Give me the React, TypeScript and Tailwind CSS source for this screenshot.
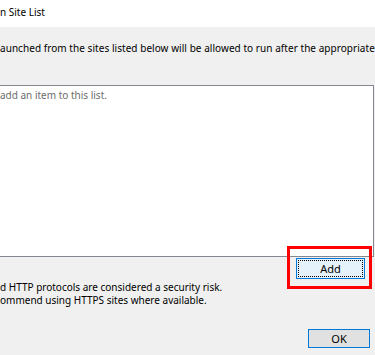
export default function App() {
  const font = { fontFamily: '"Noto Sans", "Open Sans", sans-serif' };
  return (
    <div className="w-[375px] h-[355px] overflow-hidden bg-[#f0f0f0] text-[10px] leading-[13px] text-black flex flex-col" style={font}>
      <div className="h-[27px] bg-white flex items-center whitespace-nowrap overflow-hidden pb-[2px]">
        n Site List
      </div>
      <div className="h-[58px] pt-[15px] whitespace-nowrap tracking-[0.05px]">
        aunched from the sites listed below will be allowed to run after the appropriate
      </div>
      <div className="h-[172px] bg-white border-y border-r border-[#828790] mr-[1px] whitespace-nowrap overflow-hidden text-[#6d6d6d] pt-[3px]">
        add an item to this list.
      </div>
      <div className="flex flex-col">
        <div className="flex">
          <div className="flex-1 pt-[24px] whitespace-nowrap overflow-hidden">
            <div>d HTTP protocols are considered a security risk.</div>
            <div>ommend using HTTPS sites where available.</div>
          </div>
          <div className="w-[88px] shrink-0 pr-[3px]">
            <div className="mt-[-11px] w-[85px] h-[43px] border-[3px] border-[#ff0000] pl-[6px] pt-[9px]">
              <div className="w-[69px] h-[21px] bg-[#e5f1fb] border border-[#0078d7] p-[1px]">
                <div className="w-full h-full border border-dotted border-black flex items-center justify-center text-[11px]">Add</div>
              </div>
            </div>
          </div>
        </div>
        <div className="flex justify-end pr-[5px] mt-[22px]">
          <div className="w-[62px] h-[19px] bg-[#e1e1e1] border border-[#0078d7] flex items-center justify-center text-[11px]">OK</div>
        </div>
      </div>
    </div>
  );
}
